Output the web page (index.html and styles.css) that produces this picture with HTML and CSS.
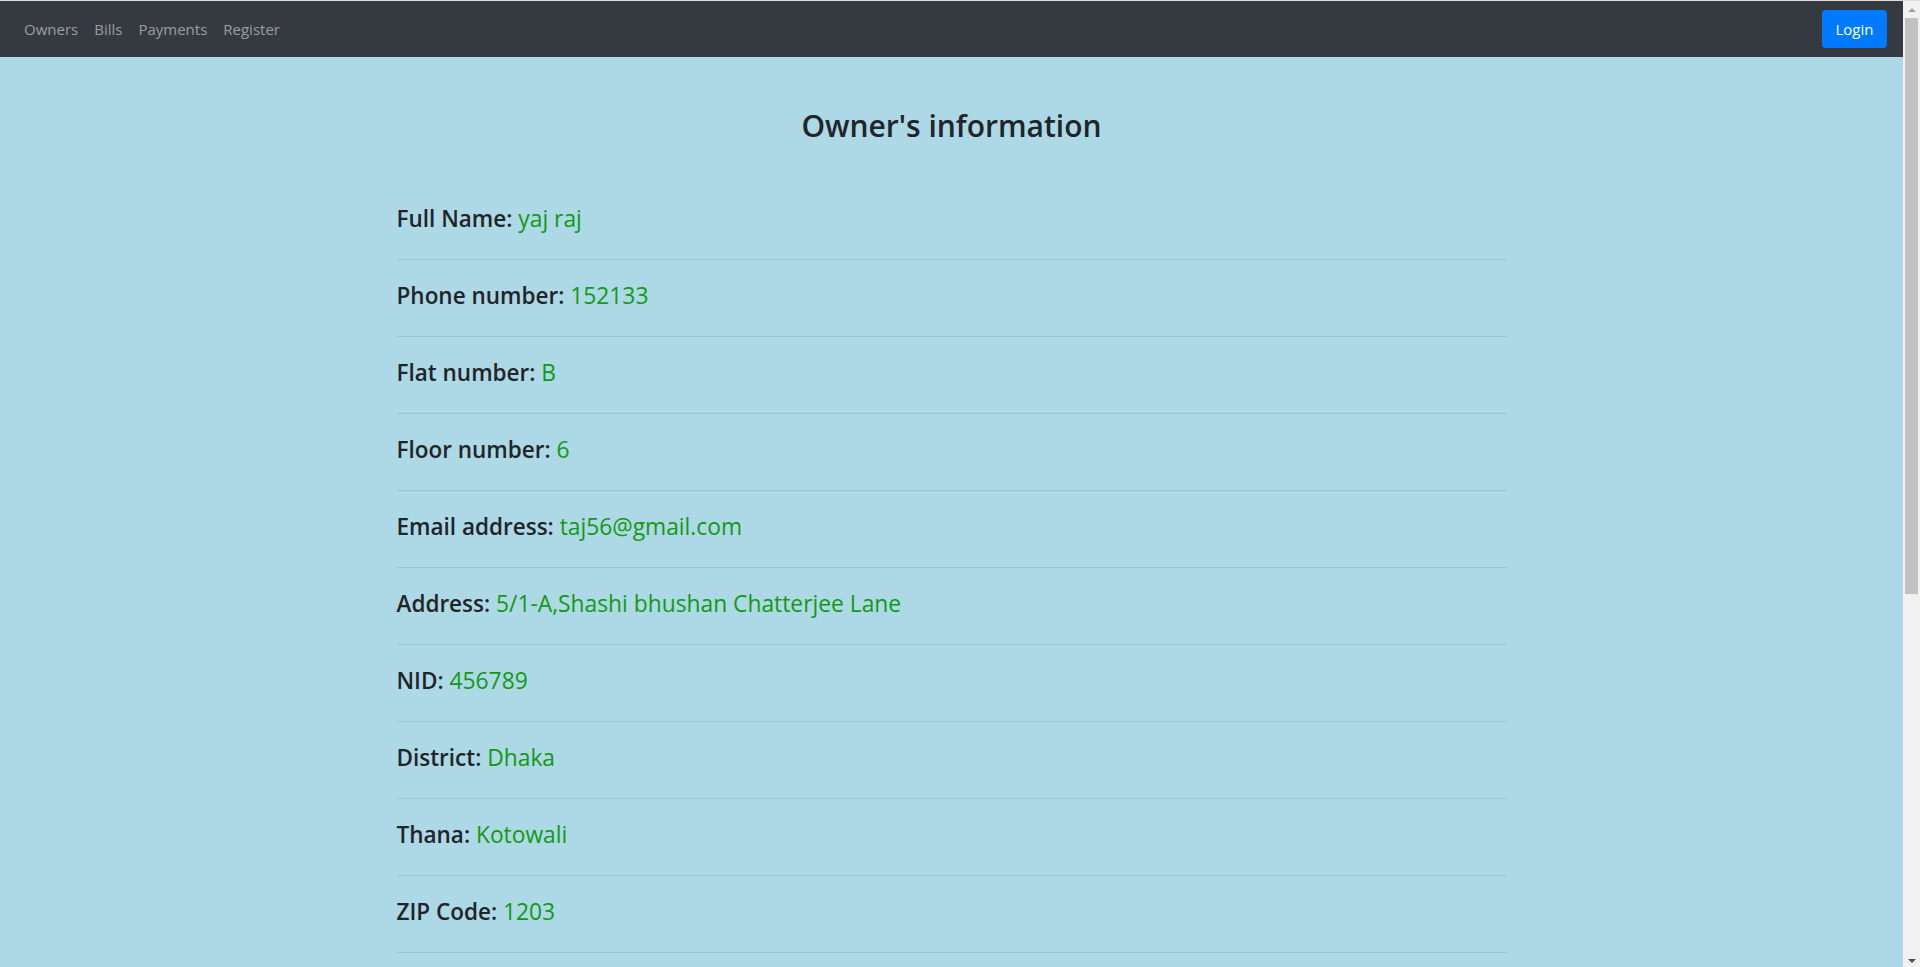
FILE: index.html
```html
<!DOCTYPE html>
<html lang="en">
<head>
<meta charset="utf-8">
<title>Owner's information</title>
<link rel="stylesheet" href="styles.css">
</head>
<body>
<div class="viewport">
  <nav class="navbar">
    <ul class="nav-links">
      <li><a class="nav-link" href="#">Owners</a></li>
      <li><a class="nav-link" href="#">Bills</a></li>
      <li><a class="nav-link" href="#">Payments</a></li>
      <li><a class="nav-link" href="#">Register</a></li>
    </ul>
    <a class="btn-login" href="#">Login</a>
  </nav>
  <main class="page">
    <div class="container">
      <h2 class="title">Owner's information</h2>
      <div class="info-list">
        <div class="info-row"><span class="label">Full Name:</span> <span class="value">yaj raj</span></div>
        <div class="info-row"><span class="label">Phone number:</span> <span class="value">152133</span></div>
        <div class="info-row"><span class="label">Flat number:</span> <span class="value">B</span></div>
        <div class="info-row"><span class="label">Floor number:</span> <span class="value">6</span></div>
        <div class="info-row"><span class="label">Email address:</span> <span class="value">taj56@gmail.com</span></div>
        <div class="info-row"><span class="label">Address:</span> <span class="value">5/1-A,Shashi bhushan Chatterjee Lane</span></div>
        <div class="info-row"><span class="label">NID:</span> <span class="value">456789</span></div>
        <div class="info-row"><span class="label">District:</span> <span class="value">Dhaka</span></div>
        <div class="info-row"><span class="label">Thana:</span> <span class="value">Kotowali</span></div>
        <div class="info-row"><span class="label">ZIP Code:</span> <span class="value">1203</span></div>
      </div>
    </div>
  </main>
</div>
<div class="scrollbar" aria-hidden="true">
  <div class="sb-button"><span class="arrow-up"></span></div>
  <div class="sb-track"><div class="sb-thumb"></div></div>
  <div class="sb-button"><span class="arrow-down"></span></div>
</div>
</body>
</html>
```

FILE: styles.css
```css
* { box-sizing: border-box; }

html, body {
  height: 100%;
}

body {
  margin: 0;
  border-top: 1px solid #dcdcdc;
  display: flex;
  overflow: hidden;
  font-family: "Open Sans", "Noto Sans", sans-serif;
  color: #212529;
  background: #add8e6;
}

.viewport {
  flex: 1;
  min-width: 0;
  overflow: hidden;
}

/* scrollbar column */
.scrollbar {
  width: 17px;
  flex: none;
  display: flex;
  flex-direction: column;
  background: #f1f1f1;
}

.sb-button {
  height: 17px;
  display: flex;
  align-items: center;
  justify-content: center;
}

.arrow-up {
  width: 0;
  height: 0;
  border-left: 4px solid transparent;
  border-right: 4px solid transparent;
  border-bottom: 4px solid #a3a3a3;
  margin-top: 1px;
}

.arrow-down {
  width: 0;
  height: 0;
  border-left: 4px solid transparent;
  border-right: 4px solid transparent;
  border-top: 4px solid #505050;
  margin-top: 4px;
}

.sb-track {
  flex: 1;
  padding: 0 2px;
}

.sb-thumb {
  height: 576px;
  background: #c1c1c1;
}

/* navbar */
.navbar {
  height: 56px;
  background: #343a40;
  display: flex;
  align-items: center;
  justify-content: space-between;
  padding: 0 16px;
}

.nav-links {
  list-style: none;
  margin: 0;
  padding: 0;
  display: flex;
}

.nav-link {
  display: block;
  padding: 8px;
  font-size: 15px;
  line-height: 24px;
  color: rgba(255, 255, 255, 0.5);
  text-decoration: none;
}

.btn-login {
  display: block;
  width: 65px;
  height: 38px;
  line-height: 38px;
  text-align: center;
  background: #007bff;
  color: #fff;
  font-size: 15px;
  border-radius: 4px;
  text-decoration: none;
}

/* content */
.container {
  max-width: 1140px;
  margin: 0 auto;
  padding: 50px 15px 0;
}

.title {
  margin: 0;
  text-align: center;
  font-size: 30px;
  line-height: 38px;
  font-weight: 600;
}

.info-list {
  margin-top: 38px;
}

.info-row {
  height: 77px;
  padding-top: 20px;
  font-size: 22.5px;
  line-height: 32px;
  border-bottom: 1px solid rgba(0, 0, 0, 0.1);
}

.label {
  font-weight: 600;
}

.value {
  font-size: 22.8px;
  color: #129a12;
}
```
